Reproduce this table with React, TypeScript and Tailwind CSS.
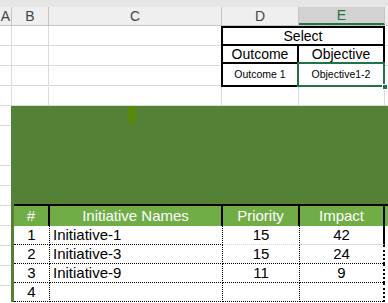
import React from 'react';

const grid = 'border-[#dadada]';

const ColHeader = ({ w, label, active }: { w: string; label: string; active?: boolean }) => (
  <div
    className={`${w} h-full shrink-0 flex items-center justify-center border-r border-[#c6c6c6] ${
      active ? 'bg-[#d2d2d2] text-[#217346] border-b-2 border-b-[#217346]' : 'text-[#444]'
    }`}
  >
    {label}
  </div>
);

const Blank = ({ w, h = 'h-[20px]', noRight }: { w: string; h?: string; noRight?: boolean }) => (
  <div className={`${w} ${h} shrink-0 border-b ${noRight ? '' : 'border-r'} ${grid}`} />
);

const rows = [
  { n: '1', name: 'Initiative-1', p: '15', i: '42' },
  { n: '2', name: 'Initiative-3', p: '15', i: '24' },
  { n: '3', name: 'Initiative-9', p: '11', i: '9' },
  { n: '4', name: '', p: '', i: '' },
];

const App = () => {
  return (
    <div className="w-[388px] h-[303px] overflow-hidden bg-white font-['Liberation_Sans',Arial,sans-serif] text-black">
      <div className="h-[7px] bg-[#e6e6e6]" />

      {/* column letters */}
      <div className="h-[19px] flex bg-[#efefef] border-b border-[#c6c6c6] text-[14px]">
        <ColHeader w="w-[12px]" label="A" />
        <ColHeader w="w-[37px]" label="B" />
        <ColHeader w="w-[173px]" label="C" />
        <ColHeader w="w-[77px]" label="D" />
        <ColHeader w="w-[86px]" label="E" active />
        <div className="flex-1" />
      </div>

      {/* rows 1-3 with the select box */}
      <div className="flex">
        <div className="flex">
          {['w-[12px]', 'w-[37px]', 'w-[173px]'].map((w, c) => (
            <div key={w} className="flex flex-col">
              <Blank w={w} />
              <Blank w={w} />
              <Blank w={w} noRight={c === 2} />
            </div>
          ))}
        </div>
        <div className="w-[164px] h-[61px] -ml-[1px] border-2 border-black flex flex-col">
          <div className="h-[18px] border-b-2 border-black flex items-center justify-center text-[14px]">Select</div>
          <div className="h-[18px] border-b-2 border-black flex text-[14px]">
            <div className="w-[76px] border-r-2 border-black flex items-center justify-center">Outcome</div>
            <div className="flex-1 flex items-center justify-center">Objective</div>
          </div>
          <div className="flex-1 flex text-[10.5px]">
            <div className="w-[76px] border-r-2 border-black flex items-center justify-center">Outcome 1</div>
            <div className="flex-1 relative flex items-center justify-center">
              Objective1-2
              <div className="absolute -left-[2px] -top-[2px] -right-[2px] -bottom-[2px] border-2 border-[#217346]" />
              <div className="absolute -right-[5px] -bottom-[5px] w-[6px] h-[6px] bg-[#217346] border border-white" />
            </div>
          </div>
        </div>
        <div className="flex-1 flex flex-col">
          <Blank w="w-full" noRight />
          <Blank w="w-full" noRight />
          <Blank w="w-full" noRight />
        </div>
      </div>

      {/* row 4 */}
      <div className="flex">
        <Blank w="w-[12px]" h="h-[19px]" />
        <Blank w="w-[37px]" h="h-[19px]" />
        <Blank w="w-[173px]" h="h-[19px]" />
        <Blank w="w-[77px]" h="h-[19px]" />
        <Blank w="w-[86px]" h="h-[19px]" />
        <div className="flex-1 h-[19px] border-b border-[#dadada]" />
      </div>

      {/* green block */}
      <div className="flex">
        <div className="w-[11px] shrink-0 flex flex-col">
          <div className="h-[20px] border-b border-[#dadada]" />
          <div className="h-[40px] border-b border-[#dadada]" />
          <div className="h-[20px] border-b border-[#dadada]" />
          <div className="h-[20px] border-b border-[#dadada]" />
          <div className="h-[20px] border-b border-[#dadada]" />
          <div className="h-[20px] border-b border-[#dadada]" />
          <div className="h-[20px] border-b border-[#dadada]" />
          <div className="h-[20px] border-b border-[#dadada]" />
        </div>
        <div className="flex-1 bg-[#538135] pl-[3px]">
          <div className="h-[98px]">
            <div className="ml-[115px] w-[6px] h-[18px] bg-[#5b8a00]" />
          </div>

          {/* table header */}
          <div className="flex h-[22px] border-t-2 border-black bg-[#70ad47] text-white text-[15px]">
            <div className="w-[36px] shrink-0 border-r-2 border-black flex items-center justify-center">#</div>
            <div className="w-[173px] shrink-0 border-r-2 border-black flex items-center justify-center">Initiative Names</div>
            <div className="w-[77px] shrink-0 border-r-2 border-black flex items-center justify-center">Priority</div>
            <div className="w-[85px] shrink-0 border-r-2 border-black flex items-center justify-center">Impact</div>
            <div className="flex-1" />
          </div>

          {/* table body */}
          {rows.map((r, k) => {
            const numBorder = k === 0 ? 'border-b border-b-[#d9d9d9] border-b-solid' : 'border-b border-dotted border-black';
            return (
              <div key={r.n} className="flex h-[19px] bg-white text-[15px]">
                <div className="w-[36px] shrink-0 border-r border-b border-dotted border-black flex items-center justify-center">
                  {r.n}
                </div>
                <div className="w-[173px] shrink-0 border-r border-b border-dotted border-black flex items-center pl-[3px]">
                  {r.name}
                </div>
                <div className={`w-[77px] shrink-0 border-r border-dotted border-r-black ${k === 0 ? 'border-b border-b-[#d9d9d9]' : 'border-b border-b-black'} flex items-center justify-center`}>
                  {r.p}
                </div>
                <div className={`w-[85px] shrink-0 border-r-2 border-r-black ${k === 0 ? 'border-b border-b-[#d9d9d9]' : 'border-b border-dotted border-b-black'} flex items-center justify-center`}>
                  {r.i}
                </div>
                <div className={`flex-1 ${numBorder === '' ? '' : ''}`} />
              </div>
            );
          })}
        </div>
      </div>
    </div>
  );
};

export default App;
